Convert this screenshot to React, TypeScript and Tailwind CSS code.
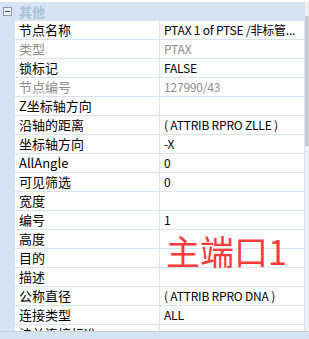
import React from "react";

type Row = { label: string; value?: string; dim?: boolean };

const rows: Row[] = [
  { label: "节点名称", value: "PTAX 1 of PTSE /非标管..." },
  { label: "类型", value: "PTAX", dim: true },
  { label: "锁标记", value: "FALSE" },
  { label: "节点编号", value: "127990/43", dim: true },
  { label: "Z坐标轴方向", value: "" },
  { label: "沿轴的距离", value: "( ATTRIB RPRO ZLLE )" },
  { label: "坐标轴方向", value: "-X" },
  { label: "AllAngle", value: "0" },
  { label: "可见筛选", value: "0" },
  { label: "宽度", value: "" },
  { label: "编号", value: "1" },
  { label: "高度", value: "" },
  { label: "目的", value: "" },
  { label: "描述", value: "" },
  { label: "公称直径", value: "( ATTRIB RPRO DNA )" },
  { label: "连接类型", value: "ALL" },
  { label: "法兰连接标准", value: "" },
];

export default function App() {
  return (
    <div
      className="relative w-[309px] h-[339px] overflow-hidden bg-white flex flex-col text-[13px] text-black"
      style={{ fontFamily: '"Noto Sans CJK SC", "Noto Sans", sans-serif' }}
    >
      <div className="h-[2px] bg-white shrink-0" />
      <div className="flex flex-1 min-h-0">
        <div className="flex-1 min-w-0 flex flex-col overflow-hidden">
          {/* group header */}
          <div className="h-[19px] shrink-0 bg-[#d5e3f2] flex items-center">
            <div className="w-[15px] flex justify-center">
              <div className="w-[9px] h-[9px] border border-[#8a9bb0] bg-[#eef3f9] flex items-center justify-center">
                <div className="w-[5px] h-px bg-[#3c4a5c]" />
              </div>
            </div>
            <span className="pl-[4px] font-bold text-[#a9c1dc] leading-none">其他</span>
          </div>
          {rows.map((r, i) => (
            <div key={i} className="flex h-[19px] shrink-0">
              <div className="w-[15px] bg-[#d5e3f2] shrink-0" />
              <div className="w-[145px] shrink-0 border-r border-b border-[#d5e3f2] pl-[4px] flex items-center whitespace-nowrap overflow-hidden">
                <span className={r.dim ? "text-[#8d8d8d]" : ""}>{r.label}</span>
              </div>
              <div className="w-[145px] shrink-0 border-r border-b border-[#d5e3f2] pl-[4px] flex items-center whitespace-nowrap overflow-hidden">
                <span className={"text-[12px] tracking-[-0.2px] " + (r.dim ? "text-[#8d8d8d]" : "")}>{r.value}</span>
              </div>
            </div>
          ))}
        </div>
        <div className="w-[4px] shrink-0 bg-[#f0f0f0] flex flex-col">
          <div className="h-[14px]" />
          <div className="h-[130px] bg-[#cdcdcd]" />
        </div>
      </div>
      <div className="h-[8px] shrink-0 border-t border-[#c4cfdc] bg-[#d5e3f2]" />
      <div className="absolute left-[166px] top-[234px] text-[34px] leading-none text-[#ff3a3a]">
        主端口1
      </div>
    </div>
  );
}
